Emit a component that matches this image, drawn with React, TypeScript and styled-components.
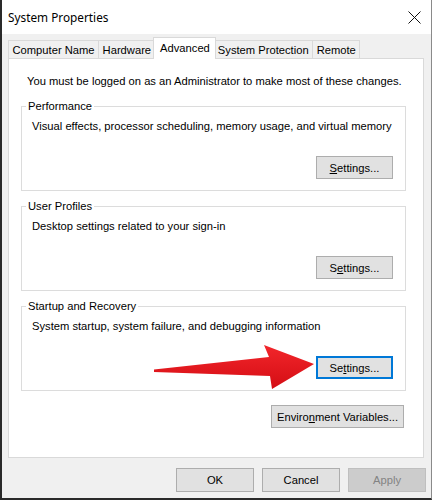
import React from "react";
import styled, { createGlobalStyle, css } from "styled-components";

const Global = createGlobalStyle`
  html, body { margin: 0; padding: 0; background: #ffffff; }
  body { font-family: "Liberation Sans", Arial, sans-serif; }
`;

const Window = styled.div`
  position: relative;
  width: 432px;
  height: 500px;
  box-sizing: border-box;
  border-left: 2px solid #2a2a2a;
  border-right: 1px solid #8a8a8a;
  border-bottom: 2px solid #2a2a2a;
  background: #f0f0f0;
  display: flex;
  flex-direction: column;
  overflow: hidden;
`;

const TitleBar = styled.div`
  height: 34px;
  flex: none;
  background: #ffffff;
  display: flex;
  align-items: center;
  justify-content: space-between;
  padding: 0 10px 0 6px;
`;

const Title = styled.span`
  font-family: "Segoe UI", "Noto Sans", sans-serif;
  font-size: 11.8px;
  color: #000;
`;

const Close = styled.svg`
  width: 13px;
  height: 13px;
`;

const Body = styled.div`
  flex: 1;
  display: flex;
  flex-direction: column;
  padding: 3px 7px 0 6px;
  font-size: 11.2px;
  color: #000;
`;

const TabRow = styled.div`
  display: flex;
  align-items: flex-end;
  height: 21px;
  position: relative;
  z-index: 1;
`;

const Tab = styled.div<{ $active?: boolean }>`
  box-sizing: border-box;
  height: 18px;
  padding: 0 3.5px;
  border: 1px solid #d9d9d9;
  border-bottom: none;
  margin-left: -1px;
  background: #f0f0f0;
  display: flex;
  align-items: center;
  white-space: nowrap;
  &:first-child { margin-left: 0; }
  ${(p) =>
    p.$active &&
    css`
      height: 22px;
      margin: 0 -2px -1px -3px;
      padding: 0 5.5px 2px 6.5px;
      background: #ffffff;
      position: relative;
      z-index: 2;
    `}
`;

const Panel = styled.div`
  box-sizing: border-box;
  height: 400px;
  background: #ffffff;
  border: 1px solid #d9d9d9;
  padding: 15px 17px 0 12px;
  display: flex;
  flex-direction: column;
`;

const Notice = styled.div`
  line-height: 14px;
  padding-left: 6px;
  white-space: nowrap;
`;

const Group = styled.fieldset<{ $first?: boolean }>`
  margin: ${(p) => (p.$first ? 11 : 8)}px 0 0;
  padding: 0 12px 11px 10px;
  border: 1px solid #dcdcdc;
  min-inline-size: 0;
  display: flex;
  flex-direction: column;
`;

const Legend = styled.legend`
  margin-left: -6px;
  padding: 0 2px;
  line-height: 14px;
`;

const Desc = styled.div`
  margin-top: 6px;
  line-height: 14px;
  white-space: nowrap;
`;

const Actions = styled.div`
  display: flex;
  justify-content: flex-end;
  margin-top: 23px;
`;

const Button = styled.button<{ $w: number; $h?: number; $focus?: boolean }>`
  box-sizing: border-box;
  width: ${(p) => p.$w}px;
  height: ${(p) => p.$h ?? 23}px;
  font-family: "Liberation Sans", Arial, sans-serif;
  font-size: 11.2px;
  color: #000;
  background: #e1e1e1;
  border: 1px solid #adadad;
  padding: 0;
  margin: 0;
  ${(p) =>
    p.$focus &&
    css`
      border: 2px solid #0078d7;
    `}
  &:disabled {
    background: #cccccc;
    border-color: #bfbfbf;
    color: #838383;
  }
`;

const EnvRow = styled.div`
  display: flex;
  justify-content: flex-end;
  margin-top: 14px;
  padding-right: 2px;
`;

const Footer = styled.div`
  display: flex;
  justify-content: flex-end;
  gap: 8px;
  padding: 10px 0 0;
  margin-right: -2px;
`;

const Arrow = styled.svg`
  position: absolute;
  left: 150px;
  top: 340px;
  width: 168px;
  height: 54px;
  overflow: visible;
`;

export default function App() {
  return (
    <>
      <Global />
      <Window>
        <TitleBar>
          <Title>System Properties</Title>
          <Close viewBox="0 0 13 13">
            <path d="M0.5 0.5 L12.5 12.5 M12.5 0.5 L0.5 12.5" stroke="#111" strokeWidth="1" fill="none" />
          </Close>
        </TitleBar>
        <Body>
          <TabRow>
            <Tab>Computer Name</Tab>
            <Tab>Hardware</Tab>
            <Tab $active>Advanced</Tab>
            <Tab>System Protection</Tab>
            <Tab>Remote</Tab>
          </TabRow>
          <Panel>
            <Notice>You must be logged on as an Administrator to make most of these changes.</Notice>
            <Group $first>
              <Legend>Performance</Legend>
              <Desc>Visual effects, processor scheduling, memory usage, and virtual memory</Desc>
              <Actions>
                <Button $w={77}>
                  <u>S</u>ettings...
                </Button>
              </Actions>
            </Group>
            <Group>
              <Legend>User Profiles</Legend>
              <Desc>Desktop settings related to your sign-in</Desc>
              <Actions>
                <Button $w={77}>
                  S<u>e</u>ttings...
                </Button>
              </Actions>
            </Group>
            <Group>
              <Legend>Startup and Recovery</Legend>
              <Desc>System startup, system failure, and debugging information</Desc>
              <Actions>
                <Button $w={77} $focus>
                  Se<u>t</u>tings...
                </Button>
              </Actions>
            </Group>
            <EnvRow>
              <Button $w={133}>
                Enviro<u>n</u>ment Variables...
              </Button>
            </EnvRow>
          </Panel>
          <Footer>
            <Button $w={78} $h={24}>OK</Button>
            <Button $w={78} $h={24}>Cancel</Button>
            <Button $w={78} $h={24} disabled>
              Apply
            </Button>
          </Footer>
        </Body>
        <Arrow viewBox="150 340 168 54">
          <defs>
            <linearGradient id="ag" x1="0" y1="0" x2="0" y2="1">
              <stop offset="0" stopColor="#f2262b" />
              <stop offset="1" stopColor="#d40d14" />
            </linearGradient>
          </defs>
          <polygon
            points="152,369.5 267,357 262,345 312,364 270,389 268,376 152,372"
            fill="url(#ag)"
          />
        </Arrow>
      </Window>
    </>
  );
}
